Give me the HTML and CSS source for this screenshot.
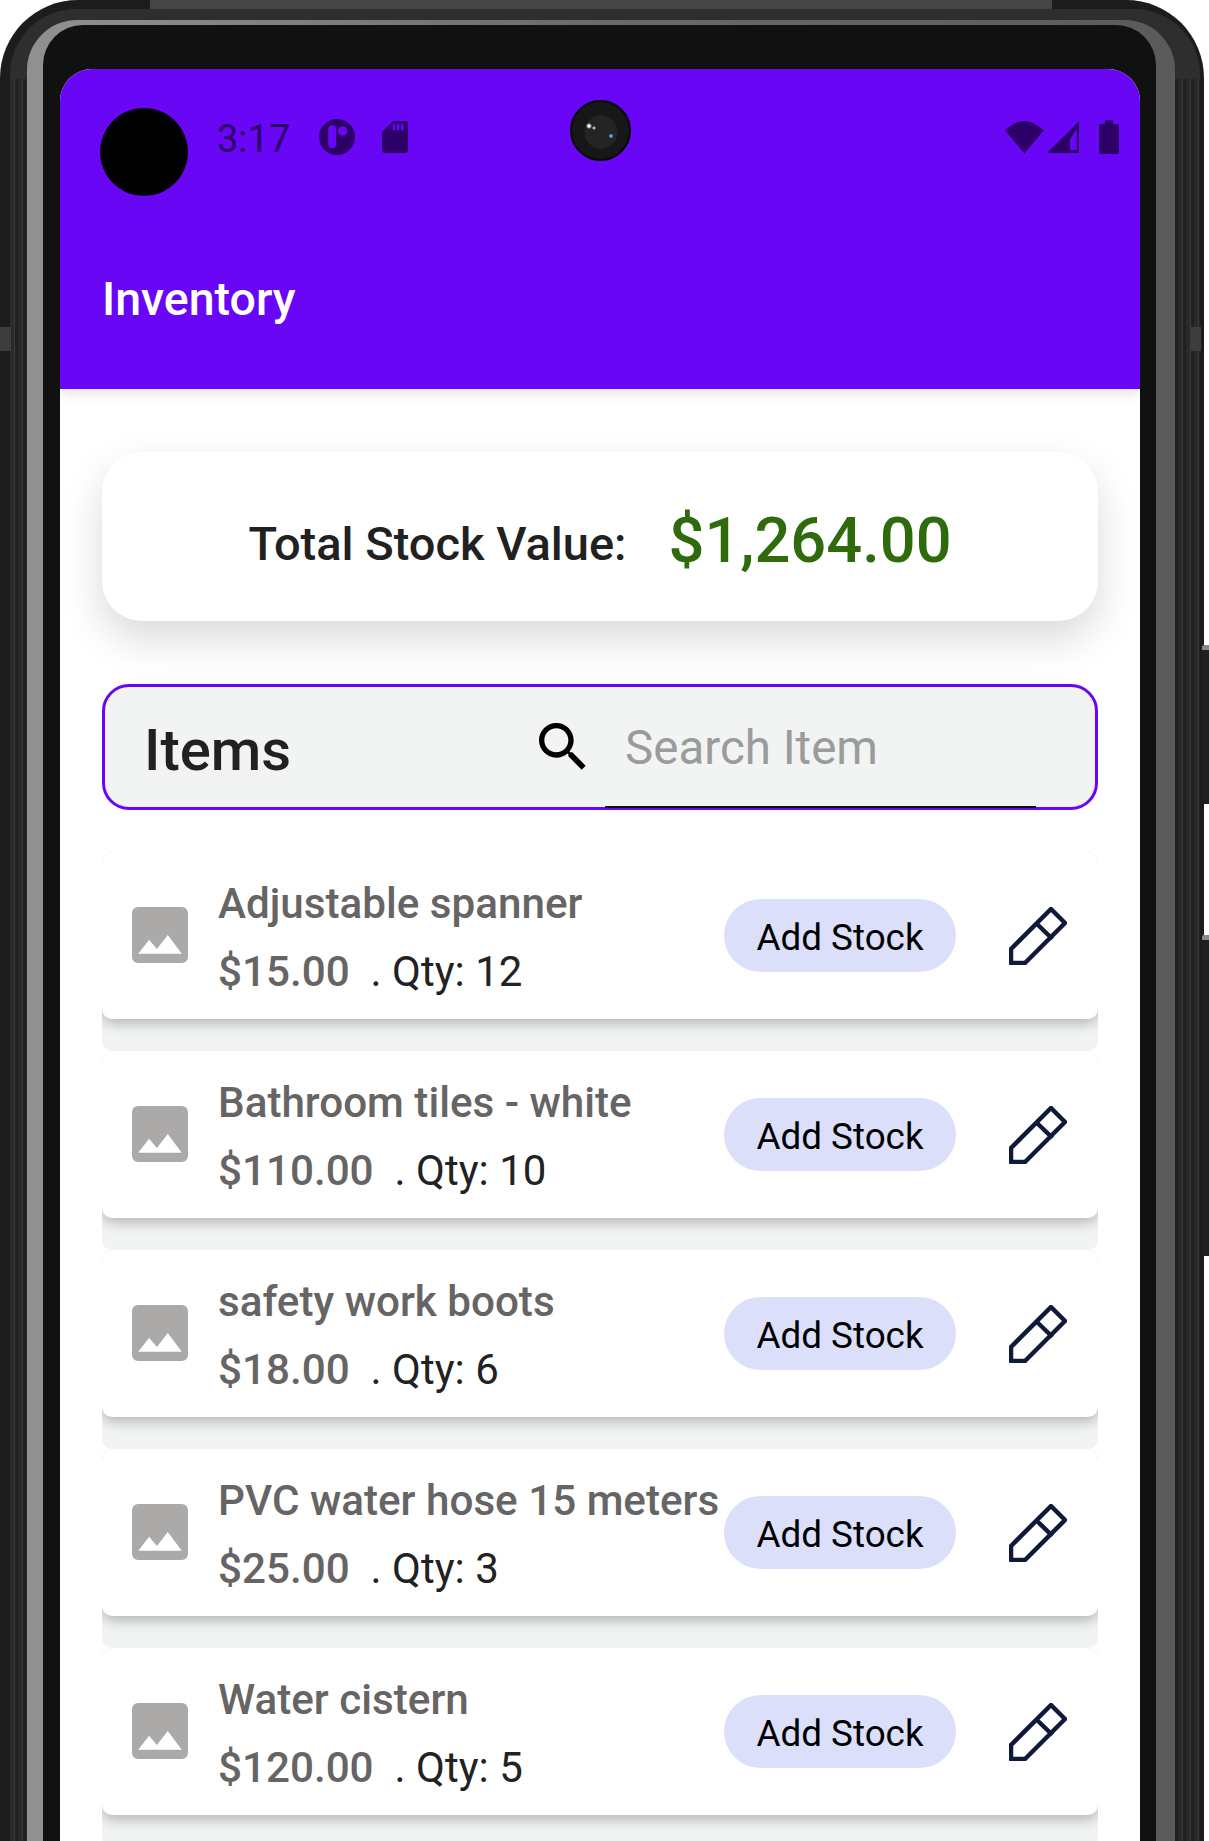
FILE: index.html
```html
<!DOCTYPE html>
<html lang="en">
<head>
    <meta charset="UTF-8">
    <meta name="viewport" content="width=device-width, initial-scale=1.0">
    <title>Inventory</title>
    <link rel="stylesheet" href="styles.css">
</head>
<body>
    <!-- Shared icons -->
    <svg class="defs">
        <symbol id="icon-image" viewBox="3 3 18 18">
            <path d="M21 19V5c0-1.1-.9-2-2-2H5c-1.1 0-2 .9-2 2v14c0 1.1.9 2 2 2h14c1.1 0 2-.9 2-2zM8.5 13.5l2.5 3.01L14.5 12l4.5 6H5l3.5-4.5z"/>
        </symbol>
        <symbol id="icon-edit" viewBox="0 0 58 58">
            <path d="M2 56V42L42 2 56 16 16 56ZM28 17 43.5 32" fill="none" stroke-width="4.5" stroke-linejoin="round"/>
        </symbol>
    </svg>

    <div class="phone">
        <div class="seam seam-top"></div>
        <div class="seam seam-left"></div>
        <div class="seam seam-right"></div>
        <div class="side-btn side-btn-power"></div>
        <div class="side-btn side-btn-volume"></div>

        <div class="rim">
            <div class="glass">
                <div class="bezel">
                    <div class="screen">
                        <div class="touch-dot"></div>
                        <div class="camera"></div>

                        <header class="app-bar">
                            <div class="status-bar">
                                <span class="time">3:17</span>
                                <svg class="st-circle" width="36" height="36" viewBox="0 0 36 36">
                                    <path fill-rule="evenodd" d="M18 0a18 18 0 1 1 0 36 18 18 0 0 1 0-36ZM13.2 6.3a4 4 0 0 0-4 4v15a4 4 0 0 0 8 0v-15a4 4 0 0 0-4-4ZM23.7 7.3a4.7 4.7 0 1 0 0 9.4 4.7 4.7 0 0 0 0-9.4Z"/>
                                </svg>
                                <svg class="st-sd" width="26" height="32" viewBox="0 0 26 32">
                                    <path fill-rule="evenodd" d="M11 0H23a3 3 0 0 1 3 3V29a3 3 0 0 1-3 3H3a3 3 0 0 1-3-3V11ZM10.7 2.7v6.6h2.6V2.7ZM14.8 2.7v6.6h2.6V2.7ZM18.9 2.7v6.6h2.6V2.7Z"/>
                                </svg>
                                <div class="status-right">
                                    <svg width="39" height="33" viewBox="0 0 39 33">
                                        <path d="M19.3 32.5 0 9.5Q19.3-9.5 38.7 9.5Z"/>
                                    </svg>
                                    <svg class="st-signal" width="33" height="33" viewBox="0 0 33 33">
                                        <path fill-rule="evenodd" d="M0 32 32 .5V32ZM23 18V29H29.7V8Z"/>
                                    </svg>
                                    <svg class="st-battery" width="20" height="34" viewBox="0 0 20 34">
                                        <path d="M6 0H14V4H18a2 2 0 0 1 2 2V32a2 2 0 0 1-2 2H2a2 2 0 0 1-2-2V6a2 2 0 0 1 2-2H6Z"/>
                                    </svg>
                                </div>
                            </div>
                            <h1 class="app-title">Inventory</h1>
                        </header>

                        <main class="content">
                            <section class="summary">
                                <span class="summary-label">Total Stock Value:</span>
                                <span class="summary-value">$1,264.00</span>
                            </section>

                            <section class="search-bar">
                                <h2 class="search-title">Items</h2>
                                <svg class="search-icon" width="64" height="64" viewBox="0 0 24 24">
                                    <path d="M15.5 14h-.79l-.28-.27C15.41 12.59 16 11.11 16 9.5 16 5.91 13.09 3 9.5 3S3 5.91 3 9.5 5.91 16 9.5 16c1.61 0 3.09-.59 4.23-1.57l.27.28v.79l5 4.99L20.49 19l-4.99-5zm-6 0C7.01 14 5 11.99 5 9.5S7.01 5 9.5 5 14 7.01 14 9.5 11.99 14 9.5 14z"/>
                                </svg>
                                <div class="search-field">Search Item</div>
                            </section>

                            <div class="item-list">
                                <div class="item">
                                    <div class="item-card">
                                        <svg class="item-image"><use href="#icon-image"/></svg>
                                        <div class="item-info">
                                            <div class="item-name">Adjustable spanner</div>
                                            <div class="item-meta"><span class="item-price">$15.00</span><span class="item-qty">. Qty: 12</span></div>
                                        </div>
                                        <button class="add-stock">Add Stock</button>
                                        <svg class="item-edit"><use href="#icon-edit"/></svg>
                                    </div>
                                </div>
                                <div class="item">
                                    <div class="item-card">
                                        <svg class="item-image"><use href="#icon-image"/></svg>
                                        <div class="item-info">
                                            <div class="item-name">Bathroom tiles - white</div>
                                            <div class="item-meta"><span class="item-price">$110.00</span><span class="item-qty">. Qty: 10</span></div>
                                        </div>
                                        <button class="add-stock">Add Stock</button>
                                        <svg class="item-edit"><use href="#icon-edit"/></svg>
                                    </div>
                                </div>
                                <div class="item">
                                    <div class="item-card">
                                        <svg class="item-image"><use href="#icon-image"/></svg>
                                        <div class="item-info">
                                            <div class="item-name">safety work boots</div>
                                            <div class="item-meta"><span class="item-price">$18.00</span><span class="item-qty">. Qty: 6</span></div>
                                        </div>
                                        <button class="add-stock">Add Stock</button>
                                        <svg class="item-edit"><use href="#icon-edit"/></svg>
                                    </div>
                                </div>
                                <div class="item">
                                    <div class="item-card">
                                        <svg class="item-image"><use href="#icon-image"/></svg>
                                        <div class="item-info">
                                            <div class="item-name">PVC water hose 15 meters</div>
                                            <div class="item-meta"><span class="item-price">$25.00</span><span class="item-qty">. Qty: 3</span></div>
                                        </div>
                                        <button class="add-stock">Add Stock</button>
                                        <svg class="item-edit"><use href="#icon-edit"/></svg>
                                    </div>
                                </div>
                                <div class="item">
                                    <div class="item-card">
                                        <svg class="item-image"><use href="#icon-image"/></svg>
                                        <div class="item-info">
                                            <div class="item-name">Water cistern</div>
                                            <div class="item-meta"><span class="item-price">$120.00</span><span class="item-qty">. Qty: 5</span></div>
                                        </div>
                                        <button class="add-stock">Add Stock</button>
                                        <svg class="item-edit"><use href="#icon-edit"/></svg>
                                    </div>
                                </div>
                            </div>
                        </main>
                    </div>
                </div>
            </div>
        </div>
    </div>
</body>
</html>
```

FILE: styles.css
```css
html, body {
    margin: 0;
    height: 1841px;
    overflow: hidden;
    background: #fff;
    font-family: Roboto, "Liberation Sans", sans-serif;
}
.defs {
    display: none;
}

/* Device frame */
.phone, .rim, .glass, .bezel {
    box-sizing: border-box;
}
.phone {
    position: relative;
    width: 1204px;
    height: 1841px;
    padding: 9px 4px 0 10px;
    background: #1c1c1c;
    border-radius: 78px 78px 0 0;
}
.rim {
    height: 100%;
    padding: 11px 25px 0 17px;
    background:
        linear-gradient(180deg, #2e2e2e 0 70px, rgba(46,46,46,0) 70px),
        repeating-linear-gradient(90deg, #2a2a2a 0 4px, #3c3c3c 4px 5px, #202020 5px 8px);
    border-radius: 66px 66px 0 0;
}
.glass {
    height: 100%;
    padding: 5px 19px 0 16px;
    background: linear-gradient(90deg, #909090 0 16px, #6a6a6a 50%, #5a5a5a 100%);
    border-radius: 50px 50px 0 0;
}
.bezel {
    height: 100%;
    padding: 44px 16px 0 17px;
    background: #111;
    border-radius: 40px 40px 0 0;
}
.screen {
    position: relative;
    height: 100%;
    background: #fff;
    border-radius: 32px 32px 0 0;
    overflow: hidden;
}
.seam {
    position: absolute;
    background: #3d3d3d;
}
.seam-top {
    top: 0;
    left: 150px;
    width: 902px;
    height: 9px;
    background: #454545;
}
.seam-left {
    top: 327px;
    left: 0;
    width: 11px;
    height: 24px;
}
.seam-right {
    top: 327px;
    left: 1190px;
    width: 11px;
    height: 24px;
}
.side-btn {
    position: absolute;
    left: 1202px;
    width: 7px;
    background: #1f1f1f;
    border-top: 5px solid #8a8a8a;
    border-radius: 2px 0 0 2px;
}
.side-btn-power {
    top: 645px;
    height: 154px;
}
.side-btn-volume {
    top: 935px;
    height: 316px;
}

/* Things lying over the app bar */
.touch-dot {
    position: absolute;
    top: 39px;
    left: 40px;
    width: 88px;
    height: 88px;
    background: #000;
    border-radius: 50%;
}
.camera {
    position: absolute;
    top: 31px;
    left: 510px;
    width: 57px;
    height: 57px;
    border: 2px solid #050505;
    border-radius: 50%;
    background:
        radial-gradient(circle at 17px 24px, #fff 0 1px, rgba(255,255,255,0) 3px),
        radial-gradient(circle at 22px 26px, #d8a0b8 0 1px, rgba(255,255,255,0) 2px),
        radial-gradient(circle at 39px 34px, #49b4f2 0 1px, rgba(73,180,242,0) 2.5px),
        radial-gradient(circle at 29px 30px, #242424 0 16px, #171717 17px);
}

/* App bar */
.app-bar {
    height: 320px;
    background: #6806f5;
    box-shadow: 0 4px 12px rgba(0, 0, 0, .12);
}
.status-bar {
    display: flex;
    align-items: center;
    height: 136px;
    padding: 0 21px 0 157px;
    color: #2d0068;
}
.status-bar svg {
    fill: #2d0068;
    flex: none;
}
.time {
    padding-top: 4px;
    font-size: 38px;
}
.st-circle {
    margin-left: 29px;
}
.st-sd {
    margin-left: 27px;
}
.status-right {
    display: flex;
    align-items: center;
    margin-left: auto;
}
.st-signal {
    margin-left: 3px;
}
.st-battery {
    margin-left: 19px;
}
.app-title {
    margin: 62px 0 0 42px;
    font-size: 46.5px;
    line-height: 64px;
    font-weight: 500;
    color: #fff;
}

/* Page content */
.content {
    padding: 63px 42px 0;
}
.summary {
    display: flex;
    align-items: center;
    justify-content: center;
    gap: 42px;
    height: 169px;
    background: #fff;
    border-radius: 40px;
    box-shadow: 0 18px 42px rgba(0, 0, 0, .15);
}
.summary-label {
    margin-top: 14px;
    font-size: 47px;
    font-weight: 500;
    color: #212121;
}
.summary-value {
    margin-top: 6px;
    font-size: 63.2px;
    font-weight: 500;
    color: #2f6a0d;
}
.search-bar {
    display: flex;
    align-items: center;
    box-sizing: border-box;
    height: 126px;
    margin: 63px 0 42px;
    padding-left: 39px;
    background: #f2f4f4;
    border: 3px solid #6806f5;
    border-radius: 27px;
}
.search-title {
    width: 387px;
    margin: 5px 0 0;
    font-size: 58px;
    font-weight: 500;
    color: #212121;
}
.search-icon {
    flex: none;
    fill: #000;
}
.search-field {
    align-self: flex-end;
    box-sizing: border-box;
    width: 431px;
    height: 124px;
    margin: 0 0 -1px 10px;
    padding: 0 0 0 20px;
    line-height: 128px;
    font-size: 47.5px;
    color: #9a9c9c;
    border-bottom: 2px solid #111;
}

/* Item rows */
.item {
    height: 199px;
    background: #f2f4f4;
    border-radius: 10px;
    overflow: hidden;
}
.item-card {
    display: flex;
    align-items: center;
    height: 167px;
    padding: 0 31px 0 30px;
    background: #fff;
    border-radius: 10px;
    box-shadow: 0 4px 14px rgba(0, 0, 0, .28);
}
.item-image {
    flex: none;
    width: 56px;
    height: 56px;
    margin-bottom: 2px;
    fill: #aca9a9;
}
.item-info {
    flex: 1;
    min-width: 0;
    margin-left: 30px;
    padding-top: 4px;
    font-size: 42.2px;
    line-height: 68px;
    white-space: nowrap;
}
.item-name {
    font-weight: 500;
    color: #666464;
}
.item-price {
    font-weight: 500;
    color: #666464;
}
.item-qty {
    margin-left: 21px;
    font-size: 42px;
    color: #222;
}
.add-stock {
    flex: none;
    width: 232px;
    height: 73px;
    padding: 4px 0 0;
    border: 0;
    border-radius: 37px;
    background: #dbdffa;
    font-family: inherit;
    font-size: 36.8px;
    color: #000;
}
.item-edit {
    flex: none;
    width: 58px;
    height: 58px;
    margin-left: 53px;
    stroke: #0f1a3a;
}
```
